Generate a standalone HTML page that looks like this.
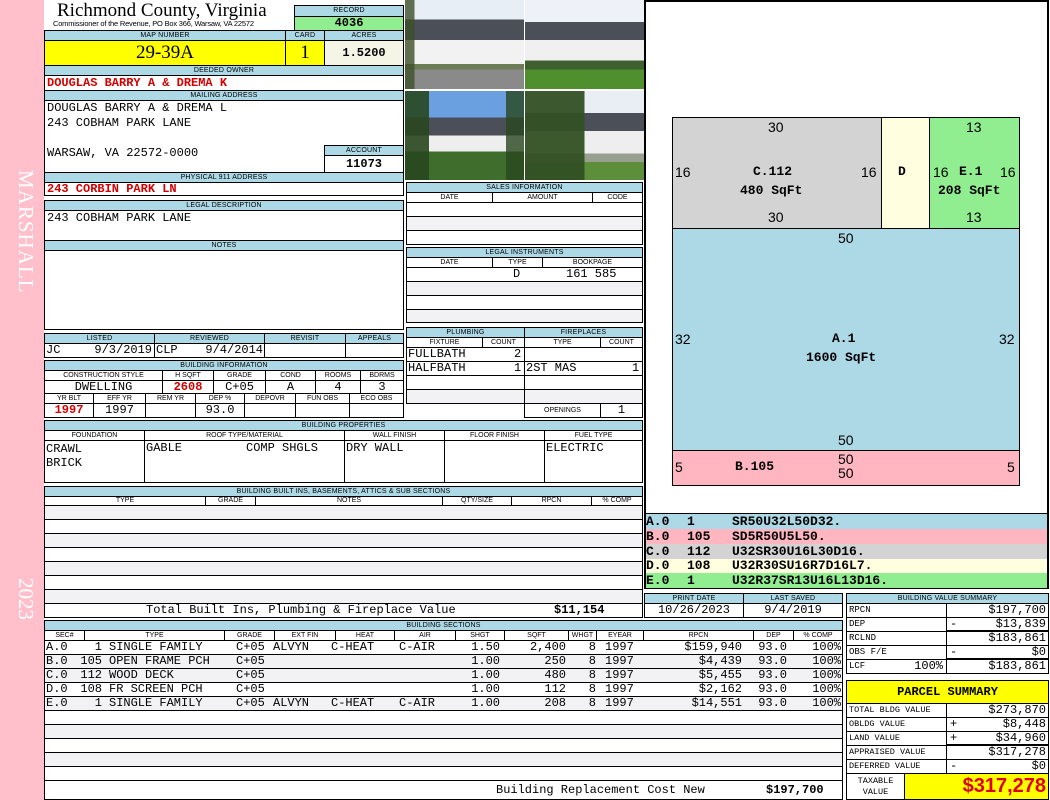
<!DOCTYPE html>
<html><head><meta charset="utf-8"><style>
*{margin:0;padding:0;box-sizing:border-box}
body{width:1050px;height:800px;position:relative;background:#fff;overflow:hidden;font-family:"Liberation Mono",monospace;font-size:12px;color:#000}
div{position:absolute}
.b{border:1px solid #000}
.h{background:#add8e6;border:1px solid #000;font:7px/9px "Liberation Sans",sans-serif;text-align:center;color:#000;letter-spacing:0.2px}
.s{font:7px/9px "Liberation Sans",sans-serif;text-align:center;border:1px solid #000;background:#fff}
.c{text-align:center}
.r{text-align:right}
.red{color:#d40000;font-weight:bold}
.v{white-space:pre;line-height:13px}
.g{background:#f2f2f4}
.row div{top:0;white-space:pre;line-height:13px}
.row{height:14px;left:0;width:850px}
.rr{text-align:right}
.lg{font-weight:bold;white-space:pre;line-height:15px;font-size:13px}
.lb{left:646px;width:401px}
</style></head><body>
<div style="left:0;top:0;width:44px;height:800px;background:#ffc0cb"></div>
<div style="left:8px;top:170px;width:30px;height:150px;color:#fff;font:21px 'Liberation Serif',serif;writing-mode:vertical-rl;letter-spacing:1px">MARSHALL</div>
<div style="left:8px;top:578px;width:30px;height:60px;color:#fff;font:21px 'Liberation Serif',serif;writing-mode:vertical-rl">2023</div>

<div style="left:57px;top:1px;font:19px/20px 'Liberation Serif',serif">Richmond County, Virginia</div>
<div style="left:53px;top:19px;font:7.5px/9px 'Liberation Sans',sans-serif;letter-spacing:-0.2px">Commissioner of the Revenue, PO Box 366, Warsaw, VA 22572</div>
<div class="h" style="left:294px;top:5px;width:110px;height:12px">RECORD</div>
<div class="b c" style="left:294px;top:16px;width:110px;height:15px;background:#90ee90;font-weight:bold;line-height:13px">4036</div>

<div class="h" style="left:44px;top:30px;width:242px;height:11px">MAP NUMBER</div>
<div class="h" style="left:285px;top:30px;width:40px;height:11px">CARD</div>
<div class="h" style="left:324px;top:30px;width:80px;height:11px">ACRES</div>
<div class="b c" style="left:44px;top:40px;width:242px;height:26px;background:#ffff00;font:19px/24px 'Liberation Serif',serif">29-39A</div>
<div class="b c" style="left:285px;top:40px;width:40px;height:26px;background:#ffff00;font:19px/24px 'Liberation Serif',serif">1</div>
<div class="b c" style="left:324px;top:40px;width:80px;height:26px;background:#f5f5e6;font-weight:bold;line-height:24px">1.5200</div>

<div class="h" style="left:44px;top:65px;width:360px;height:11px">DEEDED OWNER</div>
<div class="b v red" style="left:44px;top:75px;width:360px;height:16px;padding-left:2px;line-height:15px">DOUGLAS BARRY A &amp; DREMA K</div>
<div class="h" style="left:44px;top:90px;width:360px;height:11px">MAILING ADDRESS</div>
<div class="b" style="left:44px;top:100px;width:360px;height:73px"></div>
<div class="v" style="left:47px;top:102px">DOUGLAS BARRY A &amp; DREMA L</div>
<div class="v" style="left:47px;top:117px">243 COBHAM PARK LANE</div>
<div class="v" style="left:47px;top:147px">WARSAW, VA 22572-0000</div>
<div class="h" style="left:324px;top:145px;width:80px;height:11px">ACCOUNT</div>
<div class="b c" style="left:324px;top:155px;width:80px;height:18px;font-weight:bold;line-height:16px">11073</div>
<div class="h" style="left:44px;top:172px;width:360px;height:11px">PHYSICAL 911 ADDRESS</div>
<div class="b v red" style="left:44px;top:182px;width:360px;height:14px;padding-left:2px;line-height:13px">243 CORBIN PARK LN</div>

<div class="h" style="left:44px;top:200px;width:360px;height:11px">LEGAL DESCRIPTION</div>
<div class="b v" style="left:44px;top:210px;width:360px;height:31px;padding:1px 2px">243 COBHAM PARK LANE</div>
<div class="h" style="left:44px;top:240px;width:360px;height:11px">NOTES</div>
<div class="b" style="left:44px;top:250px;width:360px;height:80px"></div>

<div class="h" style="left:44px;top:333px;width:111px;height:11px">LISTED</div>
<div class="h" style="left:154px;top:333px;width:111px;height:11px">REVIEWED</div>
<div class="h" style="left:264px;top:333px;width:82px;height:11px">REVISIT</div>
<div class="h" style="left:345px;top:333px;width:59px;height:11px">APPEALS</div>
<div class="b" style="left:44px;top:343px;width:111px;height:15px"></div>
<div class="b" style="left:154px;top:343px;width:111px;height:15px"></div>
<div class="b" style="left:264px;top:343px;width:82px;height:15px"></div>
<div class="b" style="left:345px;top:343px;width:59px;height:15px"></div>
<div class="v" style="left:46px;top:344px">JC</div>
<div class="v r" style="left:80px;top:344px;width:72px">9/3/2019</div>
<div class="v" style="left:156px;top:344px">CLP</div>
<div class="v r" style="left:190px;top:344px;width:73px">9/4/2014</div>

<div class="h" style="left:44px;top:360px;width:360px;height:11px">BUILDING INFORMATION</div>
<div class="s" style="left:44px;top:370px;width:119px;height:11px">CONSTRUCTION STYLE</div>
<div class="s" style="left:162px;top:370px;width:52px;height:11px">H SQFT</div>
<div class="s" style="left:213px;top:370px;width:53px;height:11px">GRADE</div>
<div class="s" style="left:265px;top:370px;width:51px;height:11px">COND</div>
<div class="s" style="left:315px;top:370px;width:46px;height:11px">ROOMS</div>
<div class="s" style="left:360px;top:370px;width:44px;height:11px">BDRMS</div>
<div class="b c" style="left:44px;top:380px;width:119px;height:14px;line-height:12px">DWELLING</div>
<div class="b c red" style="left:162px;top:380px;width:52px;height:14px;line-height:12px">2608</div>
<div class="b c" style="left:213px;top:380px;width:53px;height:14px;line-height:12px">C+05</div>
<div class="b c" style="left:265px;top:380px;width:51px;height:14px;line-height:12px">A</div>
<div class="b c" style="left:315px;top:380px;width:46px;height:14px;line-height:12px">4</div>
<div class="b c" style="left:360px;top:380px;width:44px;height:14px;line-height:12px">3</div>
<div class="s" style="left:44px;top:393px;width:50px;height:11px">YR BLT</div>
<div class="s" style="left:93px;top:393px;width:53px;height:11px">EFF YR</div>
<div class="s" style="left:145px;top:393px;width:51px;height:11px">REM YR</div>
<div class="s" style="left:195px;top:393px;width:50px;height:11px">DEP %</div>
<div class="s" style="left:244px;top:393px;width:52px;height:11px">DEPOVR</div>
<div class="s" style="left:295px;top:393px;width:55px;height:11px">FUN OBS</div>
<div class="s" style="left:349px;top:393px;width:55px;height:11px">ECO OBS</div>
<div class="b c red" style="left:44px;top:403px;width:50px;height:15px;line-height:13px">1997</div>
<div class="b c" style="left:93px;top:403px;width:53px;height:15px;line-height:13px">1997</div>
<div class="b" style="left:145px;top:403px;width:51px;height:15px"></div>
<div class="b c" style="left:195px;top:403px;width:50px;height:15px;line-height:13px">93.0</div>
<div class="b" style="left:244px;top:403px;width:52px;height:15px"></div>
<div class="b" style="left:295px;top:403px;width:55px;height:15px"></div>
<div class="b" style="left:349px;top:403px;width:55px;height:15px"></div>

<!-- photos -->
<div style="left:405px;top:0;width:119px;height:89px;background:linear-gradient(90deg,rgba(60,80,40,.8) 0 8%,transparent 8%),linear-gradient(#e8eef6 0 22%,#4a4f58 22% 45%,#f2f2f2 45% 72%,#6c7d55 72% 78%,#8a8a8a 78% 100%)"></div>
<div style="left:525px;top:0;width:119px;height:89px;background:linear-gradient(#eef2f8 0 25%,#4a4f58 25% 45%,#f0f0f0 45% 68%,#3e5f2e 68% 78%,#4f8f2e 78% 100%)"></div>
<div style="left:405px;top:91px;width:119px;height:89px;background:linear-gradient(90deg,rgba(40,70,30,.9) 0 20%,transparent 20% 85%,rgba(40,70,30,.8) 85%),linear-gradient(#6aa0e0 0 30%,#4a4f58 30% 50%,#eee 50% 68%,#3f6d2c 68% 100%)"></div>
<div style="left:525px;top:91px;width:119px;height:89px;background:linear-gradient(90deg,rgba(50,80,35,.95) 0 50%,transparent 50%),linear-gradient(#e8eef4 0 25%,#4a4f58 25% 45%,#eee 45% 70%,#9aa090 70% 80%,#5d8f3a 80% 100%)"></div>

<div class="h" style="left:406px;top:182px;width:237px;height:11px">SALES INFORMATION</div>
<div class="s" style="left:406px;top:192px;width:87px;height:11px">DATE</div>
<div class="s" style="left:492px;top:192px;width:101px;height:11px">AMOUNT</div>
<div class="s" style="left:592px;top:192px;width:51px;height:11px">CODE</div>
<div class="b" style="left:406px;top:202px;width:237px;height:15px"></div>
<div class="b g" style="left:406px;top:216px;width:237px;height:15px"></div>
<div class="b" style="left:406px;top:230px;width:237px;height:15px"></div>

<div class="h" style="left:406px;top:247px;width:237px;height:11px">LEGAL INSTRUMENTS</div>
<div class="s" style="left:406px;top:257px;width:87px;height:11px">DATE</div>
<div class="s" style="left:492px;top:257px;width:51px;height:11px">TYPE</div>
<div class="s" style="left:542px;top:257px;width:101px;height:11px">BOOKPAGE</div>
<div class="b" style="left:406px;top:267px;width:237px;height:15px"></div>
<div class="v" style="left:513px;top:268px">D</div>
<div class="v" style="left:566px;top:268px">161 585</div>
<div class="b g" style="left:406px;top:281px;width:237px;height:15px"></div>
<div class="b" style="left:406px;top:295px;width:237px;height:15px"></div>
<div class="b g" style="left:406px;top:309px;width:237px;height:14px"></div>

<div class="h" style="left:406px;top:327px;width:119px;height:11px">PLUMBING</div>
<div class="h" style="left:524px;top:327px;width:119px;height:11px">FIREPLACES</div>
<div class="s" style="left:406px;top:337px;width:77px;height:11px">FIXTURE</div>
<div class="s" style="left:482px;top:337px;width:43px;height:11px">COUNT</div>
<div class="s" style="left:524px;top:337px;width:77px;height:11px">TYPE</div>
<div class="s" style="left:600px;top:337px;width:43px;height:11px">COUNT</div>
<div class="b" style="left:406px;top:347px;width:119px;height:15px"></div>
<div class="b" style="left:406px;top:361px;width:119px;height:15px"></div>
<div class="b" style="left:406px;top:375px;width:119px;height:15px"></div>
<div class="b g" style="left:406px;top:389px;width:119px;height:15px"></div>
<div class="b" style="left:524px;top:347px;width:119px;height:15px"></div>
<div class="b" style="left:524px;top:361px;width:119px;height:15px"></div>
<div class="b" style="left:524px;top:375px;width:119px;height:15px"></div>
<div class="b g" style="left:524px;top:389px;width:119px;height:15px"></div>
<div class="v" style="left:408px;top:348px">FULLBATH</div>
<div class="v" style="left:514px;top:348px">2</div>
<div class="v" style="left:408px;top:362px">HALFBATH</div>
<div class="v" style="left:514px;top:362px">1</div>
<div class="v" style="left:526px;top:362px">2ST MAS</div>
<div class="v" style="left:632px;top:362px">1</div>
<div class="s" style="left:524px;top:403px;width:77px;height:15px;line-height:13px">OPENINGS</div>
<div class="b c" style="left:600px;top:403px;width:43px;height:15px;line-height:13px">1</div>

<div class="h" style="left:44px;top:420px;width:599px;height:11px">BUILDING PROPERTIES</div>
<div class="s" style="left:44px;top:430px;width:101px;height:11px">FOUNDATION</div>
<div class="s" style="left:144px;top:430px;width:201px;height:11px">ROOF TYPE/MATERIAL</div>
<div class="s" style="left:344px;top:430px;width:101px;height:11px">WALL FINISH</div>
<div class="s" style="left:444px;top:430px;width:101px;height:11px">FLOOR FINISH</div>
<div class="s" style="left:544px;top:430px;width:99px;height:11px">FUEL TYPE</div>
<div class="b" style="left:44px;top:440px;width:101px;height:43px"></div>
<div class="b" style="left:144px;top:440px;width:201px;height:43px"></div>
<div class="b" style="left:344px;top:440px;width:101px;height:43px"></div>
<div class="b" style="left:444px;top:440px;width:101px;height:43px"></div>
<div class="b" style="left:544px;top:440px;width:99px;height:43px"></div>
<div class="v" style="left:46px;top:442px;line-height:14px">CRAWL
BRICK</div>
<div class="v" style="left:146px;top:442px">GABLE</div>
<div class="v" style="left:246px;top:442px">COMP SHGLS</div>
<div class="v" style="left:346px;top:442px">DRY WALL</div>
<div class="v" style="left:546px;top:442px">ELECTRIC</div>

<div class="h" style="left:44px;top:486px;width:599px;height:11px">BUILDING BUILT INS, BASEMENTS, ATTICS &amp; SUB SECTIONS</div>
<div class="s" style="left:44px;top:496px;width:162px;height:10px;line-height:8px">TYPE</div>
<div class="s" style="left:205px;top:496px;width:51px;height:10px;line-height:8px">GRADE</div>
<div class="s" style="left:255px;top:496px;width:188px;height:10px;line-height:8px">NOTES</div>
<div class="s" style="left:442px;top:496px;width:70px;height:10px;line-height:8px">QTY/SIZE</div>
<div class="s" style="left:511px;top:496px;width:81px;height:10px;line-height:8px">RPCN</div>
<div class="s" style="left:591px;top:496px;width:52px;height:10px;line-height:8px">% COMP</div>
<div class="b g" style="left:44px;top:505px;width:599px;height:15px"></div>
<div class="b" style="left:44px;top:519px;width:599px;height:15px"></div>
<div class="b g" style="left:44px;top:533px;width:599px;height:15px"></div>
<div class="b" style="left:44px;top:547px;width:599px;height:15px"></div>
<div class="b g" style="left:44px;top:561px;width:599px;height:15px"></div>
<div class="b" style="left:44px;top:575px;width:599px;height:15px"></div>
<div class="b g" style="left:44px;top:589px;width:599px;height:15px"></div>
<div class="b" style="left:44px;top:603px;width:599px;height:15px"></div>
<div class="v" style="left:146px;top:604px">Total Built Ins, Plumbing &amp; Fireplace Value</div>
<div class="v" style="left:554px;top:604px;font-weight:bold">$11,154</div>

<!-- building sections -->
<div class="h" style="left:44px;top:620px;width:799px;height:11px">BUILDING SECTIONS</div>
<div class="s" style="left:44px;top:630px;width:41px;height:11px">SEC#</div>
<div class="s" style="left:84px;top:630px;width:141px;height:11px">TYPE</div>
<div class="s" style="left:224px;top:630px;width:51px;height:11px">GRADE</div>
<div class="s" style="left:274px;top:630px;width:62px;height:11px">EXT FIN</div>
<div class="s" style="left:335px;top:630px;width:60px;height:11px">HEAT</div>
<div class="s" style="left:394px;top:630px;width:62px;height:11px">AIR</div>
<div class="s" style="left:455px;top:630px;width:50px;height:11px">SHGT</div>
<div class="s" style="left:504px;top:630px;width:65px;height:11px">SQFT</div>
<div class="s" style="left:568px;top:630px;width:29px;height:11px">WHGT</div>
<div class="s" style="left:596px;top:630px;width:48px;height:11px">EYEAR</div>
<div class="s" style="left:643px;top:630px;width:111px;height:11px">RPCN</div>
<div class="s" style="left:753px;top:630px;width:41px;height:11px">DEP</div>
<div class="s" style="left:793px;top:630px;width:50px;height:11px">% COMP</div>
<div class="b" style="left:44px;top:640px;width:799px;height:15px"></div>
<div class="b g" style="left:44px;top:654px;width:799px;height:15px"></div>
<div class="b g" style="left:44px;top:668px;width:799px;height:15px"></div>
<div class="b" style="left:44px;top:682px;width:799px;height:15px"></div>
<div class="b g" style="left:44px;top:696px;width:799px;height:15px"></div>
<div class="b" style="left:44px;top:710px;width:799px;height:15px"></div>
<div class="b g" style="left:44px;top:724px;width:799px;height:15px"></div>
<div class="b" style="left:44px;top:738px;width:799px;height:15px"></div>
<div class="b g" style="left:44px;top:752px;width:799px;height:15px"></div>
<div class="b" style="left:44px;top:766px;width:799px;height:15px"></div>
<div class="b" style="left:44px;top:780px;width:799px;height:20px"></div>

<div class="row" style="top:641px"><div style="left:46px">A.0</div><div class="rr" style="left:60px;width:42px">1</div><div style="left:109px">SINGLE FAMILY</div><div style="left:236px">C+05</div><div style="left:273px">ALVYN</div><div style="left:331px">C-HEAT</div><div style="left:399px">C-AIR</div><div class="rr" style="left:440px;width:60px">1.50</div><div class="rr" style="left:506px;width:60px">2,400</div><div class="rr" style="left:570px;width:26px">8</div><div style="left:605px">1997</div><div class="rr" style="left:650px;width:92px">$159,940</div><div class="rr" style="left:750px;width:37px">93.0</div><div class="rr" style="left:795px;width:46px">100%</div></div>
<div class="row" style="top:655px"><div style="left:46px">B.0</div><div class="rr" style="left:60px;width:42px">105</div><div style="left:109px">OPEN FRAME PCH</div><div style="left:236px">C+05</div><div class="rr" style="left:440px;width:60px">1.00</div><div class="rr" style="left:506px;width:60px">250</div><div class="rr" style="left:570px;width:26px">8</div><div style="left:605px">1997</div><div class="rr" style="left:650px;width:92px">$4,439</div><div class="rr" style="left:750px;width:37px">93.0</div><div class="rr" style="left:795px;width:46px">100%</div></div>
<div class="row" style="top:669px"><div style="left:46px">C.0</div><div class="rr" style="left:60px;width:42px">112</div><div style="left:109px">WOOD DECK</div><div style="left:236px">C+05</div><div class="rr" style="left:440px;width:60px">1.00</div><div class="rr" style="left:506px;width:60px">480</div><div class="rr" style="left:570px;width:26px">8</div><div style="left:605px">1997</div><div class="rr" style="left:650px;width:92px">$5,455</div><div class="rr" style="left:750px;width:37px">93.0</div><div class="rr" style="left:795px;width:46px">100%</div></div>
<div class="row" style="top:683px"><div style="left:46px">D.0</div><div class="rr" style="left:60px;width:42px">108</div><div style="left:109px">FR SCREEN PCH</div><div style="left:236px">C+05</div><div class="rr" style="left:440px;width:60px">1.00</div><div class="rr" style="left:506px;width:60px">112</div><div class="rr" style="left:570px;width:26px">8</div><div style="left:605px">1997</div><div class="rr" style="left:650px;width:92px">$2,162</div><div class="rr" style="left:750px;width:37px">93.0</div><div class="rr" style="left:795px;width:46px">100%</div></div>
<div class="row" style="top:697px"><div style="left:46px">E.0</div><div class="rr" style="left:60px;width:42px">1</div><div style="left:109px">SINGLE FAMILY</div><div style="left:236px">C+05</div><div style="left:273px">ALVYN</div><div style="left:331px">C-HEAT</div><div style="left:399px">C-AIR</div><div class="rr" style="left:440px;width:60px">1.00</div><div class="rr" style="left:506px;width:60px">208</div><div class="rr" style="left:570px;width:26px">8</div><div style="left:605px">1997</div><div class="rr" style="left:650px;width:92px">$14,551</div><div class="rr" style="left:750px;width:37px">93.0</div><div class="rr" style="left:795px;width:46px">100%</div></div>
<div class="v" style="left:496px;top:784px">Building Replacement Cost New</div>
<div class="v" style="left:766px;top:784px;font-weight:bold">$197,700</div>

<!-- sketch -->
<div class="b" style="left:644px;top:0;width:405px;height:515px;border-width:2px"></div>
<div class="b" style="left:672px;top:117px;width:210px;height:112px;background:#d3d3d3"></div>
<div class="b" style="left:881px;top:117px;width:49px;height:112px;background:#ffffe0"></div>
<div class="b" style="left:929px;top:117px;width:91px;height:112px;background:#90ee90"></div>
<div class="b" style="left:672px;top:228px;width:348px;height:223px;background:#add8e6"></div>
<div class="b" style="left:672px;top:450px;width:348px;height:36px;background:#ffb6c1"></div>
<div style="font:14px 'Liberation Sans',sans-serif;left:768px;top:119px">30</div>
<div style="font:14px 'Liberation Sans',sans-serif;left:768px;top:209px">30</div>
<div style="font:14px 'Liberation Sans',sans-serif;left:675px;top:164px">16</div>
<div style="font:14px 'Liberation Sans',sans-serif;left:861px;top:164px">16</div>
<div style="font:bold 13px 'Liberation Mono',monospace;left:753px;top:164px">C.112</div>
<div style="font:bold 13px 'Liberation Mono',monospace;left:740px;top:183px">480 SqFt</div>
<div style="font:bold 13px 'Liberation Mono',monospace;left:898px;top:164px">D</div>
<div style="font:14px 'Liberation Sans',sans-serif;left:966px;top:119px">13</div>
<div style="font:14px 'Liberation Sans',sans-serif;left:966px;top:209px">13</div>
<div style="font:14px 'Liberation Sans',sans-serif;left:933px;top:164px">16</div>
<div style="font:14px 'Liberation Sans',sans-serif;left:1000px;top:164px">16</div>
<div style="font:bold 13px 'Liberation Mono',monospace;left:959px;top:164px">E.1</div>
<div style="font:bold 13px 'Liberation Mono',monospace;left:938px;top:183px">208 SqFt</div>
<div style="font:14px 'Liberation Sans',sans-serif;left:838px;top:230px">50</div>
<div style="font:14px 'Liberation Sans',sans-serif;left:838px;top:432px">50</div>
<div style="font:14px 'Liberation Sans',sans-serif;left:675px;top:331px">32</div>
<div style="font:14px 'Liberation Sans',sans-serif;left:999px;top:331px">32</div>
<div style="font:bold 13px 'Liberation Mono',monospace;left:832px;top:331px">A.1</div>
<div style="font:bold 13px 'Liberation Mono',monospace;left:806px;top:350px">1600 SqFt</div>
<div style="font:14px 'Liberation Sans',sans-serif;left:675px;top:459px">5</div>
<div style="font:14px 'Liberation Sans',sans-serif;left:1007px;top:459px">5</div>
<div style="font:bold 13px 'Liberation Mono',monospace;left:735px;top:459px">B.105</div>
<div style="font:14px 'Liberation Sans',sans-serif;left:838px;top:452px;line-height:14px">50<br>50</div>

<!-- legend -->
<div class="b" style="left:644px;top:513px;width:405px;height:76px;border-width:2px"></div>
<div class="lb" style="top:514px;height:15px;background:#add8e6"></div>
<div class="lb" style="top:529px;height:15px;background:#ffb6c1"></div>
<div class="lb" style="top:544px;height:15px;background:#d3d3d3"></div>
<div class="lb" style="top:559px;height:14px;background:#ffffe0"></div>
<div class="lb" style="top:573px;height:15px;background:#90ee90"></div>
<div class="lg" style="left:646px;top:514px">A.0</div><div class="lg" style="left:687px;top:514px">1</div><div class="lg" style="left:732px;top:514px">SR50U32L50D32.</div>
<div class="lg" style="left:646px;top:529px">B.0</div><div class="lg" style="left:687px;top:529px">105</div><div class="lg" style="left:732px;top:529px">SD5R50U5L50.</div>
<div class="lg" style="left:646px;top:544px">C.0</div><div class="lg" style="left:687px;top:544px">112</div><div class="lg" style="left:732px;top:544px">U32SR30U16L30D16.</div>
<div class="lg" style="left:646px;top:559px;line-height:14px">D.0</div><div class="lg" style="left:687px;top:559px;line-height:14px">108</div><div class="lg" style="left:732px;top:559px;line-height:14px">U32R30SU16R7D16L7.</div>
<div class="lg" style="left:646px;top:573px">E.0</div><div class="lg" style="left:687px;top:573px">1</div><div class="lg" style="left:732px;top:573px">U32R37SR13U16L13D16.</div>

<div class="h" style="left:644px;top:593px;width:100px;height:11px">PRINT DATE</div>
<div class="h" style="left:743px;top:593px;width:100px;height:11px">LAST SAVED</div>
<div class="b c" style="left:644px;top:603px;width:100px;height:15px;line-height:13px">10/26/2023</div>
<div class="b c" style="left:743px;top:603px;width:100px;height:15px;line-height:13px">9/4/2019</div>

<div class="h" style="left:846px;top:593px;width:203px;height:11px">BUILDING VALUE SUMMARY</div>
<div class="b" style="left:846px;top:603px;width:101px;height:15px;font-size:9px;padding-left:2px;line-height:13px">RPCN</div>
<div class="b r" style="left:946px;top:603px;width:103px;height:15px;padding-right:2px;line-height:13px">$197,700</div>
<div class="b" style="left:846px;top:617px;width:101px;height:15px;font-size:9px;padding-left:2px;line-height:13px">DEP</div>
<div class="b r" style="left:946px;top:617px;width:103px;height:15px;padding-right:2px;line-height:13px;border-bottom-width:2px"><span style="position:absolute;left:3px">-</span>$13,839</div>
<div class="b" style="left:846px;top:631px;width:101px;height:15px;font-size:9px;padding-left:2px;line-height:13px">RCLND</div>
<div class="b r" style="left:946px;top:631px;width:103px;height:15px;padding-right:2px;line-height:13px">$183,861</div>
<div class="b" style="left:846px;top:645px;width:101px;height:15px;font-size:9px;padding-left:2px;line-height:13px">OBS F/E</div>
<div class="b r" style="left:946px;top:645px;width:103px;height:15px;padding-right:2px;line-height:13px;border-bottom-width:2px"><span style="position:absolute;left:3px">-</span>$0</div>
<div class="b" style="left:846px;top:659px;width:101px;height:15px;font-size:9px;padding-left:2px;line-height:13px">LCF<span style="position:absolute;right:3px;font-size:12px">100%</span></div>
<div class="b r" style="left:946px;top:659px;width:103px;height:15px;padding-right:2px;line-height:13px">$183,861</div>

<div class="b c" style="left:846px;top:680px;width:203px;height:24px;background:#ffff00;font:bold 12px/22px 'Liberation Mono',monospace">PARCEL SUMMARY</div>
<div class="b" style="left:846px;top:703px;width:101px;height:15px;font-size:8.5px;padding-left:2px;line-height:13px">TOTAL BLDG VALUE</div>
<div class="b r" style="left:946px;top:703px;width:103px;height:15px;padding-right:2px;line-height:13px">$273,870</div>
<div class="b" style="left:846px;top:717px;width:101px;height:15px;font-size:8.5px;padding-left:2px;line-height:13px">OBLDG VALUE</div>
<div class="b r" style="left:946px;top:717px;width:103px;height:15px;padding-right:2px;line-height:13px"><span style="position:absolute;left:3px">+</span>$8,448</div>
<div class="b" style="left:846px;top:731px;width:101px;height:15px;font-size:8.5px;padding-left:2px;line-height:13px">LAND VALUE</div>
<div class="b r" style="left:946px;top:731px;width:103px;height:15px;padding-right:2px;line-height:13px;border-bottom-width:2px"><span style="position:absolute;left:3px">+</span>$34,960</div>
<div class="b" style="left:846px;top:745px;width:101px;height:15px;font-size:8.5px;padding-left:2px;line-height:13px">APPRAISED VALUE</div>
<div class="b r" style="left:946px;top:745px;width:103px;height:15px;padding-right:2px;line-height:13px">$317,278</div>
<div class="b" style="left:846px;top:759px;width:101px;height:15px;font-size:8.5px;padding-left:2px;line-height:13px">DEFERRED VALUE</div>
<div class="b r" style="left:946px;top:759px;width:103px;height:15px;padding-right:2px;line-height:13px"><span style="position:absolute;left:3px">-</span>$0</div>
<div class="b c" style="left:846px;top:773px;width:59px;height:27px;font-size:8.5px;line-height:11px;padding-top:2px">TAXABLE<br>VALUE</div>
<div class="b r" style="left:904px;top:773px;width:145px;height:27px;background:#ffff00;color:#e00000;font:bold 20px/25px 'Liberation Sans',sans-serif;padding-right:2px">$317,278</div>
</body></html>
